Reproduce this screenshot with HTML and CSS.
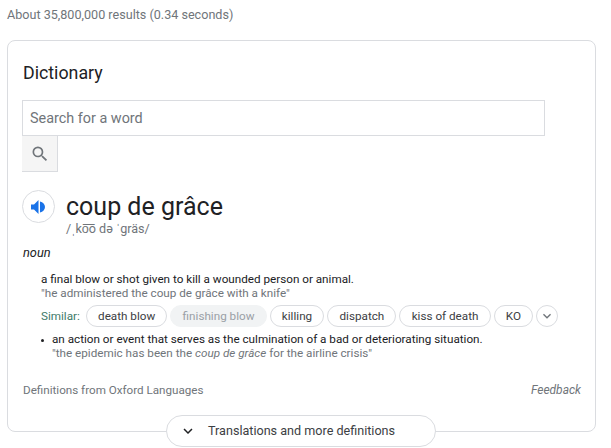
FILE: index.html
```html
<!DOCTYPE html>
<html lang="en">
<head>
  <meta charset="UTF-8">
  <title>coup de grâce - Dictionary</title>
  <link rel="stylesheet" href="styles.css">
</head>
<body>

  <div class="stats">About 35,800,000 results (0.34 seconds)</div>

  <div class="card">
    <h2 class="card-title">Dictionary</h2>

    <div class="search-box">Search for a word</div>
    <div class="search-button">
      <svg width="20" height="20" viewBox="0 0 24 24"><path fill="#70757a" d="M15.5 14h-.79l-.28-.27A6.47 6.47 0 0 0 16 9.5 6.5 6.5 0 1 0 9.5 16c1.61 0 3.09-.59 4.23-1.57l.27.28v.79l5 4.99L20.49 19l-4.99-5zm-6 0C7.01 14 5 11.99 5 9.5S7.01 5 9.5 5 14 7.01 14 9.5 11.99 14 9.5 14z"/></svg>
    </div>

    <div class="headword">
      <div class="speaker">
        <svg width="15" height="14" viewBox="0 0 15 14"><path fill="#1a73e8" d="M0 4.500v5h3l4.500 4.500V0L3 4.500H0zM9 1.500c3 .8 5 3 5 5.500s-2 4.700-5 5.500V1.500z"/></svg>
      </div>
      <div class="word">
        <div class="word-text">coup de grâce</div>
        <div class="phonetic">/ˌko͞o də ˈgräs/</div>
      </div>
    </div>

    <div class="pos">noun</div>

    <div class="senses">
      <div class="sense-text">a final blow or shot given to kill a wounded person or animal.</div>
      <div class="quote">"he administered the coup de grâce with a knife"</div>

      <div class="similar">
        <span class="similar-label">Similar:</span>
        <span class="chip">death blow</span>
        <span class="chip chip-off">finishing blow</span>
        <span class="chip">killing</span>
        <span class="chip">dispatch</span>
        <span class="chip">kiss of death</span>
        <span class="chip">KO</span>
        <span class="chip-more">
          <svg width="16" height="16" viewBox="0 0 24 24"><path fill="#70757a" d="M16.59 8.59 12 13.17 7.41 8.59 6 10l6 6 6-6z"/></svg>
        </span>
      </div>

      <div class="sense-two">
        <span class="bullet"></span>
        <div>
          <div class="sense-text">an action or event that serves as the culmination of a bad or deteriorating situation.</div>
          <div class="quote">"the epidemic has been the <i>coup de grâce</i> for the airline crisis"</div>
        </div>
      </div>
    </div>

    <div class="card-footer">
      <span>Definitions from Oxford Languages</span>
      <i>Feedback</i>
    </div>

    <div class="more-button">
      <svg width="18" height="18" viewBox="0 0 24 24"><path fill="#202124" d="M16.59 8.59 12 13.17 7.41 8.59 6 10l6 6 6-6z"/></svg>
      <span class="more-label">Translations and more definitions</span>
    </div>
  </div>

</body>
</html>
```

FILE: styles.css
```css
body {
  margin: 0;
  padding: 8px 7px 0;
  background-color: #fff;
  color: #202124;
  font-family: Roboto, Arial, sans-serif;
}
.stats {
  height: 17px;
  line-height: 14px;
  font-size: 12.6px;
  color: #70757a;
}
.card {
  position: relative;
  box-sizing: border-box;
  width: 589px;
  height: 392px;
  margin-top: 15px;
  margin-bottom: 17px;
  padding: 21px 14px 0;
  border: 1px solid #dadce0;
  border-radius: 8px;
}
.card-title {
  margin: 0;
  padding-left: 1px;
  font-size: 17.8px;
  font-weight: 400;
  line-height: 22px;
}
.search-box {
  box-sizing: border-box;
  width: 523px;
  height: 36px;
  margin-top: 16px;
  padding-left: 7px;
  border: 1px solid #dadce0;
  font-size: 14.4px;
  line-height: 35px;
  color: #70757a;
}
.search-button {
  box-sizing: border-box;
  display: flex;
  align-items: center;
  justify-content: center;
  width: 36px;
  height: 36px;
  background: #f5f5f5;
  border-right: 1px solid #dadce0;
  border-bottom: 1px solid #dadce0;
}
.headword {
  display: flex;
  gap: 11px;
  margin-top: 18px;
}
.speaker {
  box-sizing: border-box;
  display: flex;
  align-items: center;
  justify-content: center;
  width: 33px;
  height: 33px;
  border: 1px solid #dadce0;
  border-radius: 50%;
}
.word-text {
  font-size: 25px;
  line-height: 34px;
}
.phonetic {
  margin-top: -2px;
  font-size: 12.6px;
  line-height: 14px;
  color: #70757a;
}
.pos {
  margin-top: 9px;
  padding-left: 1px;
  font-size: 12.8px;
  font-style: italic;
  line-height: 16px;
}
.senses {
  margin-top: 11px;
  padding-left: 19px;
  font-size: 11.7px;
  line-height: 14px;
}
.quote {
  color: #70757a;
}
.similar {
  display: flex;
  align-items: center;
  gap: 3px;
  margin-top: 5px;
  height: 22px;
}
.similar-label {
  margin-right: 3px;
  color: #3d7a68;
}
.chip {
  box-sizing: border-box;
  height: 22px;
  padding: 0 11.2px;
  border: 1px solid #dadce0;
  border-radius: 11px;
  line-height: 20px;
  white-space: nowrap;
  color: #3c4043;
}
.chip-off {
  border-color: #f1f3f4;
  background: #f1f3f4;
  color: #9aa0a6;
}
.chip-more {
  box-sizing: border-box;
  display: flex;
  align-items: center;
  justify-content: center;
  width: 22px;
  height: 22px;
  border: 1px solid #dadce0;
  border-radius: 50%;
}
.sense-two {
  display: flex;
  gap: 8px;
  margin-top: 5px;
}
.bullet {
  flex: none;
  width: 3px;
  height: 3px;
  margin-top: 7px;
  border-radius: 50%;
  background: #202124;
}
.card-footer {
  display: flex;
  justify-content: space-between;
  margin-top: 23px;
  padding-left: 1px;
  font-size: 11.65px;
  line-height: 14px;
  color: #70757a;
}
.card-footer i {
  font-size: 12px;
}
.more-button {
  position: absolute;
  left: 158px;
  top: 374px;
  box-sizing: border-box;
  display: flex;
  align-items: center;
  gap: 11px;
  width: 270px;
  height: 32px;
  padding-left: 12px;
  background: #fff;
  border: 1px solid #dadce0;
  border-radius: 16px;
  font-size: 12.6px;
  color: #3c4043;
}
.more-label {
  padding-bottom: 2px;
}
```
